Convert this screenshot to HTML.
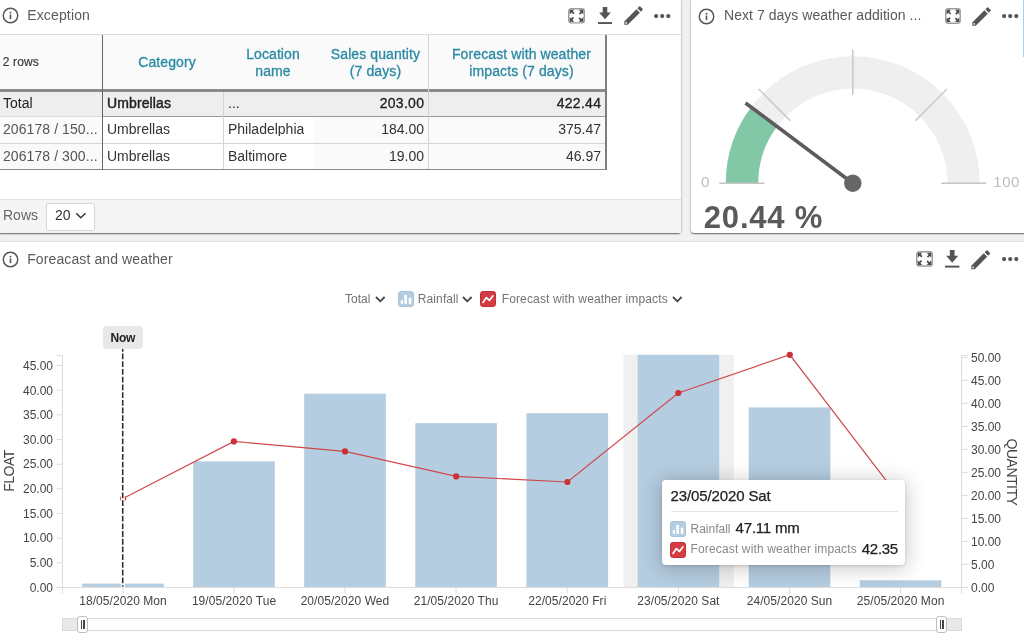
<!DOCTYPE html>
<html>
<head>
<meta charset="utf-8">
<title>Dashboard</title>
<style>
*{box-sizing:border-box;margin:0;padding:0}
html,body{width:1024px;height:641px;overflow:hidden;background:#f1f1f1;font-family:"Liberation Sans",sans-serif;color:#444}
.abs{position:absolute}
.panel{position:absolute;background:#fff;border-radius:3px;box-shadow:0 1px 1.5px rgba(0,0,0,.55),0 0 3px rgba(0,0,0,.14)}
.t{position:absolute;white-space:nowrap;line-height:1}
.ptitle{font-size:14px;color:#5a5a5a}
svg{position:absolute;overflow:visible}
/* table */
.cell{position:absolute;overflow:hidden;white-space:nowrap;font-size:14px;color:#333;line-height:1}
.lg{font-size:12px;color:#737373}
.ax{font-size:12px;color:#444}
.hdr{color:#2b89a3;font-size:14px;text-align:center;line-height:18px;white-space:normal;-webkit-text-stroke:.3px #2b89a3;letter-spacing:.1px}
.md{-webkit-text-stroke:.3px currentColor}
</style>
</head>
<body>
<div id="wrap" style="position:absolute;left:0;top:0;width:1024px;height:641px;will-change:transform">

<svg width="0" height="0" style="position:absolute">
 <defs>
  <g id="ic-expand">
    <rect x="0.7" y="0.7" width="15.6" height="13.6" rx="2.4" fill="#fff" stroke="#9c9c9c" stroke-width="1.4"/>
    <g fill="#4c4c4c">
      <path d="M1.7 1.7 h4.6 l-1.5 1.5 l1.7 1.7 l-1.2 1.2 l-1.7 -1.7 l-1.9 1.9 z"/>
      <path d="M15.3 1.7 v4.6 l-1.5 -1.5 l-1.7 1.7 l-1.2 -1.2 l1.7 -1.7 l-1.9 -1.9 z"/>
      <path d="M1.7 13.3 v-4.6 l1.5 1.5 l1.7 -1.7 l1.2 1.2 l-1.7 1.7 l1.9 1.9 z"/>
      <path d="M15.3 13.3 h-4.6 l1.5 -1.5 l-1.7 -1.7 l1.2 -1.2 l1.7 1.7 l1.9 -1.9 z"/>
    </g>
  </g>
  <g id="ic-download" fill="#555">
    <path d="M4.7 0 h4.6 v5.6 h3.6 l-5.9 6.6 l-5.9 -6.6 h3.6 z"/>
    <rect x="0" y="15.1" width="14" height="1.9"/>
  </g>
  <g id="ic-pencil" fill="#555">
    <path d="M0.30 18.80 L0.30 15.41 L12.46 3.24 L15.86 6.64 L3.69 18.80 Z"/>
    <path d="M13.38 2.32 L15.15 0.56 Q15.71 -0.01 16.28 0.56 L18.54 2.82 Q19.11 3.39 18.54 3.95 L16.78 5.72 Z"/>
    <circle cx="2.14" cy="16.96" r="0.85" fill="#fff"/>
  </g>
  <g id="ic-dots" fill="#555">
    <circle cx="2.1" cy="2.1" r="2.1"/><circle cx="8.2" cy="2.1" r="2.1"/><circle cx="14.3" cy="2.1" r="2.1"/>
  </g>
  <g id="ic-info">
    <circle cx="8.5" cy="8.5" r="7.25" fill="none" stroke="#555" stroke-width="1.45"/><rect x="7.7" y="7.5" width="1.6" height="4.6" fill="#555"/><rect x="7.7" y="4.8" width="1.6" height="1.7" fill="#555"/>
  </g>

  <g id="ic-rain">
    <rect x="0.5" y="0.5" width="15" height="15" rx="2.3" fill="#b5cde0" stroke="#a7c3d9" stroke-width="1"/>
    <rect x="2.8" y="9.2" width="2.2" height="3.6" fill="#fff"/><rect x="6.3" y="3.9" width="2.6" height="8.9" fill="#fff"/><rect x="10.8" y="6.8" width="2.6" height="6" fill="#fff"/>
  </g>
  <g id="ic-fc">
    <rect x="0.5" y="0.5" width="15" height="15" rx="2.3" fill="#d23c42" stroke="#c23036" stroke-width="1"/>
    <path d="M3 11.4 L6.4 6.6 L9.4 9.4 L13 4.8" fill="none" stroke="#fff" stroke-width="1.7" stroke-linejoin="round" stroke-linecap="round"/>
  </g>
 </defs>
</svg>

<!-- ================= PANEL 1 : Exception ================= -->
<div class="panel" id="p1" style="left:-2px;top:-2px;width:682.7px;height:234.6px"></div>
<div class="abs" id="p1body" style="left:0;top:0;width:680.7px;height:232.6px;overflow:hidden">
  <!-- header -->
  <svg id="i1" style="left:2.4px;top:7.1px" width="17" height="17"><use href="#ic-info"/></svg>
  <div class="t ptitle" id="t1" style="left:27.2px;top:8px;letter-spacing:.15px">Exception</div>


  <svg style="left:568.1px;top:8px" width="17" height="15.6" viewBox="0 0 17 15" preserveAspectRatio="none"><use href="#ic-expand"/></svg>
  <svg style="left:598px;top:7px" width="14" height="17"><use href="#ic-download"/></svg>
  <svg style="left:624px;top:6px" width="19" height="19"><use href="#ic-pencil"/></svg>
  <svg style="left:654px;top:14px" width="17" height="5"><use href="#ic-dots"/></svg>

  <!-- table -->
  <div class="abs" style="left:0;top:34px;width:681px;height:1px;background:#dcdcdc"></div>
  <div class="abs" id="thead" style="left:0;top:35px;width:606px;height:55px;background:#fafafa"></div>
  <div class="abs" id="rtotal" style="left:0;top:91px;width:606px;height:25px;background:#eeeeee"></div>
  <div class="abs" style="left:0;top:117px;width:102px;height:52px;background:#fafafa"></div>
  <div class="abs" style="left:103px;top:117px;width:211px;height:52px;background:#fff"></div>
  <div class="abs" style="left:314px;top:117px;width:292px;height:52px;background:#fafafa"></div>

  <!-- grid lines -->
  <div class="abs" style="left:0;top:89px;width:606px;height:3px;background:#8a8a8a"></div>
  <div class="abs" style="left:0;top:116px;width:102px;height:1px;background:#dcdcdc"></div>
  <div class="abs" style="left:102px;top:116px;width:504px;height:1px;background:#9a9a9a"></div>
  <div class="abs" style="left:0;top:143px;width:606px;height:1px;background:#d4d4d4"></div>
  <div class="abs" style="left:0;top:169px;width:606px;height:1px;background:#8a8a8a"></div>
  <div class="abs" style="left:102px;top:35px;width:1px;height:135px;background:#666"></div>
  <div class="abs" style="left:223px;top:92px;width:1px;height:77px;background:#d4d4d4"></div>
  <div class="abs" style="left:428px;top:35px;width:1px;height:134px;background:#d4d4d4"></div>
  <div class="abs" style="left:605px;top:35px;width:1.7px;height:135px;background:#7e7e7e"></div>

  <!-- header text -->
  <div class="t" id="h0" style="left:2.7px;top:56px;font-size:12px;color:#3c3c3c;letter-spacing:.15px;-webkit-text-stroke:.2px #3c3c3c">2 rows</div>
  <div class="cell hdr" id="h1" style="left:104.5px;top:53px;width:125px">Category</div>
  <div class="cell hdr" id="h2" style="line-height:17.4px;margin-top:.6px;left:224px;top:45px;width:98px">Location<br>name</div>
  <div class="cell hdr" id="h3" style="line-height:17.4px;margin-top:.6px;left:318px;top:45px;width:115px">Sales quantity<br>(7 days)</div>
  <div class="cell hdr" id="h4" style="line-height:17.4px;margin-top:.6px;left:429px;top:45px;width:185px">Forecast with weather<br>impacts (7 days)</div>

  <!-- total row -->
  <div class="cell" id="c00" style="left:3px;top:96px;color:#222">Total</div>
  <div class="cell" id="c01" style="left:107px;top:96px;color:#222;-webkit-text-stroke:.45px #222;letter-spacing:.12px">Umbrellas</div>
  <div class="cell" id="c02" style="left:228px;top:96px;color:#222">...</div>
  <div class="cell" id="c03" style="left:330px;top:96px;width:94.3px;text-align:right;color:#222;-webkit-text-stroke:.3px #222;letter-spacing:.3px">203.00</div>
  <div class="cell" id="c04" style="left:500px;top:96px;width:101.3px;text-align:right;color:#222;-webkit-text-stroke:.3px #222;letter-spacing:.3px">422.44</div>
  <!-- row 1 -->
  <div class="cell" id="c10" style="left:3px;top:122px;color:#555;letter-spacing:.08px">206178 / 150...</div>
  <div class="cell" id="c11" style="left:107px;top:122px">Umbrellas</div>
  <div class="cell" id="c12" style="left:228px;top:122px">Philadelphia</div>
  <div class="cell" id="c13" style="left:330px;top:122px;width:94px;text-align:right">184.00</div>
  <div class="cell" id="c14" style="left:500px;top:122px;width:101px;text-align:right">375.47</div>
  <!-- row 2 -->
  <div class="cell" id="c20" style="left:3px;top:149px;color:#555;letter-spacing:.08px">206178 / 300...</div>
  <div class="cell" id="c21" style="left:107px;top:149px">Umbrellas</div>
  <div class="cell" id="c22" style="left:228px;top:149px">Baltimore</div>
  <div class="cell" id="c23" style="left:330px;top:149px;width:94px;text-align:right">19.00</div>
  <div class="cell" id="c24" style="left:500px;top:149px;width:101px;text-align:right">46.97</div>

  <!-- footer -->
  <div class="abs" style="left:0;top:199px;width:681px;height:34px;background:#f5f5f5;border-top:1px solid #e2e2e2"></div>
  <div class="t" id="rows" style="left:3px;top:208px;font-size:14px;color:#666">Rows</div>
  <div class="abs" id="sel" style="left:46.4px;top:203px;width:48.2px;height:27.6px;background:#fff;border:1px solid #d6d6d6;border-radius:2px"></div>
  <div class="t" id="sel20" style="left:55px;top:208px;font-size:14px;color:#333">20</div>
  <svg style="left:74.8px;top:212.4px" width="12" height="8" viewBox="0 0 12 8"><path d="M1.2 1.2 L5.8 5.8 L10.4 1.2" fill="none" stroke="#333" stroke-width="1.5"/></svg>
</div>

<!-- ================= PANEL 2 : Gauge ================= -->
<div class="panel" id="p2" style="left:690.6px;top:-2px;width:340px;height:234.6px"></div>


<div class="abs" id="p2body" style="left:690px;top:0;width:334px;height:233px;overflow:hidden">
</div>
<svg id="gauge" style="left:0;top:0" width="1024" height="240">
  <path d="M725.80 183.20 A127.0 127.0 0 0 1 979.80 183.20 L947.40 183.20 A94.6 94.6 0 0 0 758.20 183.20 Z" fill="#efefef"/>
  <path d="M725.80 183.20 A127.0 127.0 0 0 1 751.10 107.14 L777.04 126.54 A94.6 94.6 0 0 0 758.20 183.20 Z" fill="#82c8a6"/>
  <g stroke="#c4c4c4" stroke-width="1.4"><line x1="764.40" y1="183.20" x2="719.40" y2="183.20"/><line x1="790.29" y1="120.69" x2="758.47" y2="88.87"/><line x1="852.80" y1="94.80" x2="852.80" y2="49.80"/><line x1="915.31" y1="120.69" x2="947.13" y2="88.87"/><line x1="941.20" y1="183.20" x2="986.20" y2="183.20"/></g>
  <line x1="852.8" y1="183.2" x2="745.49" y2="102.95" stroke="#5c5c5c" stroke-width="3.6"/>
  <circle cx="852.8" cy="183.2" r="8.7" fill="#666"/>
</svg>
<svg style="left:698.4px;top:7.6px" width="17" height="17"><use href="#ic-info"/></svg>
<div class="t ptitle" id="t2" style="left:724px;top:8px;letter-spacing:.04px">Next 7 days weather addition ...</div>
<svg style="left:945.1px;top:8.1px" width="15.9" height="15.9" viewBox="0 0 17 15" preserveAspectRatio="none"><use href="#ic-expand"/></svg>
<svg style="left:972.4px;top:6.6px" width="19" height="19"><use href="#ic-pencil"/></svg>
<svg style="left:1002px;top:14px" width="17" height="5"><use href="#ic-dots"/></svg>
<div class="t" id="g0" style="left:701px;top:174px;font-size:15px;color:#bdbdbd">0</div>
<div class="t" id="g100" style="left:993.3px;top:174px;font-size:15px;color:#bdbdbd;letter-spacing:.5px">100</div>
<div class="t" id="gval" style="left:703.8px;top:202px;font-size:31px;font-weight:bold;color:#5a5a5a;letter-spacing:.8px">20.44 %</div>
<div class="abs" style="left:1022.8px;top:0;width:1.2px;height:57px;background:#a9cdea"></div>

<!-- ================= PANEL 3 : Chart ================= -->
<div class="panel" id="p3" style="left:-2px;top:242px;width:1030px;height:410px"></div>

<div class="abs" id="p3body" style="left:0;top:242px;width:1024px;height:399px;overflow:hidden"></div>
<svg id="chart" style="left:0;top:0" width="1024" height="641">
<rect x="623.4" y="354.8" width="110.3" height="232.6" fill="#f0f0f0"/>
<rect x="82.2" y="583.6" width="81.6" height="3.8" fill="#b5cde0"/>
<rect x="193.2" y="461.3" width="81.6" height="126.1" fill="#b5cde0"/>
<rect x="304.2" y="393.7" width="81.6" height="193.7" fill="#b5cde0"/>
<rect x="415.3" y="423.2" width="81.6" height="164.2" fill="#b5cde0"/>
<rect x="526.5" y="413.2" width="81.6" height="174.2" fill="#b5cde0"/>
<rect x="637.6" y="354.8" width="81.6" height="232.6" fill="#b5cde0"/>
<rect x="748.7" y="407.4" width="81.6" height="180.0" fill="#b5cde0"/>
<rect x="859.8" y="580.3" width="81.6" height="7.1" fill="#b5cde0"/>
<g stroke="#dcdcdc" stroke-width="1" fill="none">
<path d="M56.5 355.5 H62.5 V593.5"/>
<path d="M968 355.5 H961.5 V593.5"/>
<path d="M56.5 587.4 H968"/>
<path d="M56.5 587.40 H62.5"/>
<path d="M56.5 562.75 H62.5"/>
<path d="M56.5 538.10 H62.5"/>
<path d="M56.5 513.45 H62.5"/>
<path d="M56.5 488.80 H62.5"/>
<path d="M56.5 464.15 H62.5"/>
<path d="M56.5 439.50 H62.5"/>
<path d="M56.5 414.85 H62.5"/>
<path d="M56.5 390.20 H62.5"/>
<path d="M56.5 365.55 H62.5"/>
<path d="M961.5 587.40 H968"/>
<path d="M961.5 564.40 H968"/>
<path d="M961.5 541.40 H968"/>
<path d="M961.5 518.40 H968"/>
<path d="M961.5 495.40 H968"/>
<path d="M961.5 472.40 H968"/>
<path d="M961.5 449.40 H968"/>
<path d="M961.5 426.40 H968"/>
<path d="M961.5 403.40 H968"/>
<path d="M961.5 380.40 H968"/>
<path d="M961.5 357.40 H968"/>
<path d="M123.0 587.4 V593.5"/>
<path d="M234.0 587.4 V593.5"/>
<path d="M345.0 587.4 V593.5"/>
<path d="M456.1 587.4 V593.5"/>
<path d="M567.3 587.4 V593.5"/>
<path d="M678.4 587.4 V593.5"/>
<path d="M789.5 587.4 V593.5"/>
<path d="M900.6 587.4 V593.5"/>
</g>
<path d="M123 498.6 L233.9 441.4 L345 451.4 L456.2 476.4 L567.4 482 L678.3 393 L789.8 354.8 L900.6 499.3" fill="none" stroke="#cf474b" stroke-width="1.15"/>
<circle cx="123" cy="498.6" r="3.1" fill="#cb3238"/>
<circle cx="233.9" cy="441.4" r="3.1" fill="#cb3238"/>
<circle cx="345" cy="451.4" r="3.1" fill="#cb3238"/>
<circle cx="456.2" cy="476.4" r="3.1" fill="#cb3238"/>
<circle cx="567.4" cy="482" r="3.1" fill="#cb3238"/>
<circle cx="678.3" cy="393" r="3.1" fill="#cb3238"/>
<circle cx="789.8" cy="354.8" r="3.1" fill="#cb3238"/>
<circle cx="900.6" cy="499.3" r="3.1" fill="#cb3238"/>
<line x1="122.8" y1="349" x2="122.8" y2="587.6" stroke="#fff" stroke-width="4"/><line x1="122.7" y1="349" x2="122.7" y2="586.8" stroke="#262626" stroke-width="1.5" stroke-dasharray="5.8 1.92" stroke-dashoffset="3.16"/>
</svg>
<svg style="left:2.2px;top:250.9px" width="17" height="17"><use href="#ic-info"/></svg>
<div class="t ptitle" id="t3" style="left:27.2px;top:251.6px;letter-spacing:.11px">Foreacast and weather</div>
<svg style="left:915.5px;top:251.2px" width="17" height="15.8" viewBox="0 0 17 15" preserveAspectRatio="none"><use href="#ic-expand"/></svg>
<svg style="left:945.2px;top:250px" width="14.4" height="17.6" viewBox="0 0 14 17" preserveAspectRatio="none"><use href="#ic-download"/></svg>
<svg style="left:971.2px;top:249.6px" width="19.4" height="19.4" viewBox="0 0 19 19"><use href="#ic-pencil"/></svg>
<svg style="left:1001.5px;top:257.3px" width="17" height="5"><use href="#ic-dots"/></svg>
<div class="t lg" id="lg1" style="left:345px;top:293px">Total</div>
<svg style="left:375px;top:296px" width="11" height="7" viewBox="0 0 11 7"><path d="M1 1 L5.3 5.3 L9.6 1" fill="none" stroke="#444" stroke-width="1.8"/></svg>
<svg style="left:397.5px;top:291px" width="16" height="16"><use href="#ic-rain"/></svg>
<div class="t lg" id="lg2" style="left:417.8px;top:293px;letter-spacing:.1px">Rainfall</div>
<svg style="left:461.6px;top:296px" width="11" height="7" viewBox="0 0 11 7"><path d="M1 1 L5.3 5.3 L9.6 1" fill="none" stroke="#444" stroke-width="1.8"/></svg>
<svg style="left:479.9px;top:291px" width="16" height="16"><use href="#ic-fc"/></svg>
<div class="t lg" id="lg3" style="left:501.7px;top:293px;letter-spacing:.14px">Forecast with weather impacts</div>
<svg style="left:672px;top:296px" width="11" height="7" viewBox="0 0 11 7"><path d="M1 1 L5.3 5.3 L9.6 1" fill="none" stroke="#444" stroke-width="1.8"/></svg>
<div class="abs" id="now" style="left:103.2px;top:326px;width:39.4px;height:22.8px;background:#e8e8e8;border-radius:4px"></div>
<div class="t" id="nowt" style="left:110.5px;top:331.9px;font-size:12px;font-weight:bold;color:#222;letter-spacing:-.2px">Now</div>
<div class="t ax" style="left:0;width:53px;text-align:right;top:581.7px">0.00</div>
<div class="t ax" style="left:0;width:53px;text-align:right;top:557.0px">5.00</div>
<div class="t ax" style="left:0;width:53px;text-align:right;top:532.4px">10.00</div>
<div class="t ax" style="left:0;width:53px;text-align:right;top:507.8px">15.00</div>
<div class="t ax" style="left:0;width:53px;text-align:right;top:483.1px">20.00</div>
<div class="t ax" style="left:0;width:53px;text-align:right;top:458.4px">25.00</div>
<div class="t ax" style="left:0;width:53px;text-align:right;top:433.8px">30.00</div>
<div class="t ax" style="left:0;width:53px;text-align:right;top:409.1px">35.00</div>
<div class="t ax" style="left:0;width:53px;text-align:right;top:384.5px">40.00</div>
<div class="t ax" style="left:0;width:53px;text-align:right;top:359.8px">45.00</div>
<div class="t ax" style="left:971px;top:581.9px">0.00</div>
<div class="t ax" style="left:971px;top:558.9px">5.00</div>
<div class="t ax" style="left:971px;top:535.9px">10.00</div>
<div class="t ax" style="left:971px;top:512.9px">15.00</div>
<div class="t ax" style="left:971px;top:489.9px">20.00</div>
<div class="t ax" style="left:971px;top:466.9px">25.00</div>
<div class="t ax" style="left:971px;top:443.9px">30.00</div>
<div class="t ax" style="left:971px;top:420.9px">35.00</div>
<div class="t ax" style="left:971px;top:397.9px">40.00</div>
<div class="t ax" style="left:971px;top:374.9px">45.00</div>
<div class="t ax" style="left:971px;top:351.9px">50.00</div>
<div class="t ax" style="left:63.0px;width:120px;text-align:center;top:594.7px;letter-spacing:.06px">18/05/2020 Mon</div>
<div class="t ax" style="left:174.0px;width:120px;text-align:center;top:594.7px;letter-spacing:.06px">19/05/2020 Tue</div>
<div class="t ax" style="left:285.0px;width:120px;text-align:center;top:594.7px;letter-spacing:.06px">20/05/2020 Wed</div>
<div class="t ax" style="left:396.1px;width:120px;text-align:center;top:594.7px;letter-spacing:.06px">21/05/2020 Thu</div>
<div class="t ax" style="left:507.3px;width:120px;text-align:center;top:594.7px;letter-spacing:.06px">22/05/2020 Fri</div>
<div class="t ax" style="left:618.4px;width:120px;text-align:center;top:594.7px;letter-spacing:.06px">23/05/2020 Sat</div>
<div class="t ax" style="left:729.5px;width:120px;text-align:center;top:594.7px;letter-spacing:.06px">24/05/2020 Sun</div>
<div class="t ax" style="left:840.6px;width:120px;text-align:center;top:594.7px;letter-spacing:.06px">25/05/2020 Mon</div>
<div class="t" id="float" style="left:8.5px;top:471.3px;font-size:14px;color:#444;transform:translate(-50%,-50%) rotate(-90deg);letter-spacing:-.5px">FLOAT</div>
<div class="t" id="qty" style="left:1012.3px;top:472.3px;font-size:14px;color:#444;transform:translate(-50%,-50%) rotate(90deg);letter-spacing:-.5px">QUANTITY</div>
<div class="abs" id="sb" style="left:62px;top:618px;width:900px;height:13px;background:#fff;border:1px solid #d9d9d9"></div>
<div class="abs" style="left:62px;top:618px;width:20px;height:13px;background:#e9e9e9;border:1px solid #d9d9d9"></div>
<div class="abs" style="left:942px;top:618px;width:20px;height:13px;background:#e9e9e9;border:1px solid #d9d9d9"></div>
<div class="abs" style="left:77.2px;top:615.9px;width:10.9px;height:16.7px;background:#fff;border:1px solid #bdbdbd;border-radius:3px"></div>
<div class="abs" style="left:80.7px;top:619.6px;width:1.4px;height:9.5px;background:#444"></div>
<div class="abs" style="left:83.4px;top:619.6px;width:1.4px;height:9.5px;background:#444"></div>
<div class="abs" style="left:936.2px;top:615.9px;width:10.9px;height:16.7px;background:#fff;border:1px solid #bdbdbd;border-radius:3px"></div>
<div class="abs" style="left:939.7px;top:619.6px;width:1.4px;height:9.5px;background:#444"></div>
<div class="abs" style="left:942.4px;top:619.6px;width:1.4px;height:9.5px;background:#444"></div>
<div class="abs" id="tip" style="left:662px;top:480.4px;width:243.3px;height:84.8px;background:#fff;border-radius:4px;box-shadow:0 2px 20px 2px rgba(0,0,0,.2),0 1px 3px rgba(0,0,0,.14)"></div>
<div class="t" id="tipt" style="left:670.5px;top:487.6px;font-size:15px;color:#222;letter-spacing:-.12px;-webkit-text-stroke:.25px #222">23/05/2020 Sat</div>
<div class="abs" style="left:670.7px;top:511px;width:227px;height:1px;background:#e4e4e4"></div>
<svg style="left:670.3px;top:520.8px" width="16" height="16"><use href="#ic-rain"/></svg>
<div class="t lg" id="tr1" style="left:690.5px;top:522.5px;color:#888">Rainfall</div>
<div class="t" id="tv1" style="left:735.6px;top:520px;font-size:15px;color:#222;letter-spacing:-.2px;-webkit-text-stroke:.25px #222">47.11 mm</div>
<svg style="left:670.3px;top:541.8px" width="16" height="16"><use href="#ic-fc"/></svg>
<div class="t lg" id="tr2" style="left:690.5px;top:543.4px;color:#888;letter-spacing:.15px">Forecast with weather impacts</div>
<div class="t" id="tv2" style="left:861.8px;top:540.7px;font-size:15px;color:#222;letter-spacing:-.3px;-webkit-text-stroke:.25px #222">42.35</div>

</div>
</body>
</html>
